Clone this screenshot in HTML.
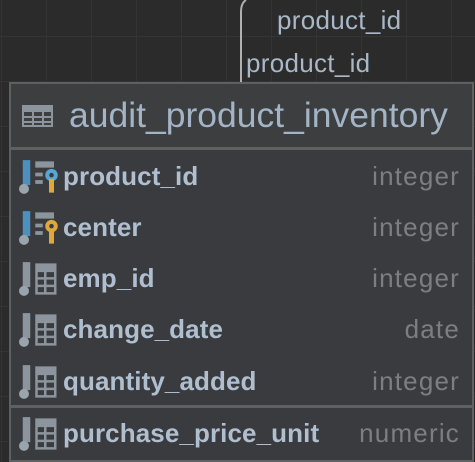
<!DOCTYPE html>
<html><head><style>
body{margin:0;width:475px;height:462px;overflow:hidden;background:#2b2b2b;
background-image:linear-gradient(#343434 1px,transparent 1px),linear-gradient(90deg,#343434 1px,transparent 1px);
background-size:45px 45px;background-position:0 36px,1px 0;font-family:"Liberation Sans",sans-serif;position:relative}
.t{position:absolute;color:#a9b7c6;font-size:26px;letter-spacing:0.3px}
.box{position:absolute;left:9px;top:82px;width:461px;height:376px;border:2px solid #5e6062;background:#393b3e}
.hdr{height:63px;background:#3c3e40;border-bottom:3px solid #5e6062;position:relative}
.hdr span{position:absolute;left:58px;top:11px;font-size:35.5px;color:#a3b4c6}
.row{position:absolute;left:0;width:461px;height:50px}
.row .n{position:absolute;left:52px;top:9px;font-size:26px;font-weight:bold;color:#b0bfd0;letter-spacing:0.1px}
.row .ty{position:absolute;right:12px;top:9px;font-size:26px;color:#7c7f82;letter-spacing:1.2px}
.row svg{position:absolute;left:8px;top:8px}
</style></head><body>
<svg style="position:absolute;left:0;top:0" width="475" height="90"><path d="M241 82 V12 Q241 3 246 0" stroke="#b0b0b0" stroke-width="2" fill="none"/></svg>
<div class="t" style="left:277px;top:5px">product_id</div>
<div class="t" style="left:246px;top:48px">product_id</div>
<div class="box">
<div class="hdr">
<svg style="position:absolute;left:11px;top:21px" width="32" height="22"><rect x="0" y="0" width="31" height="22" fill="#8c959e"/><g fill="#3c3e40"><rect x="2" y="7" width="8" height="4"/><rect x="12" y="7" width="8" height="4"/><rect x="22" y="7" width="7" height="4"/><rect x="2" y="13" width="8" height="3"/><rect x="12" y="13" width="8" height="3"/><rect x="22" y="13" width="7" height="3"/><rect x="2" y="18" width="8" height="2"/><rect x="12" y="18" width="8" height="2"/><rect x="22" y="18" width="7" height="2"/></g></svg>
<span>audit_product_inventory</span></div>

<div class="row" style="top:68px"><svg width="40" height="34" viewBox="0 0 32 27"><rect x="3" y="0" width="6" height="20" fill="#4f8fbd"/><circle cx="4" cy="23" r="4" fill="#9aa4ad"/><rect x="13" y="1" width="15" height="5" fill="#8c959e"/><rect x="13" y="10" width="6" height="3" fill="#8c959e"/><rect x="13" y="16" width="6" height="3" fill="#8c959e"/><circle cx="26" cy="12" r="5" fill="#56a6d6"/><circle cx="26" cy="12" r="1.8" fill="#393b3e"/><rect x="24" y="15" width="4" height="11" fill="#e0a838"/></svg><span class="n">product_id</span><span class="ty">integer</span></div>
<div class="row" style="top:119px"><svg width="40" height="34" viewBox="0 0 32 27"><rect x="3" y="0" width="6" height="20" fill="#4f8fbd"/><circle cx="4" cy="23" r="4" fill="#9aa4ad"/><rect x="13" y="1" width="15" height="5" fill="#8c959e"/><rect x="13" y="10" width="6" height="3" fill="#8c959e"/><rect x="13" y="16" width="6" height="3" fill="#8c959e"/><circle cx="26" cy="12" r="5" fill="#e0a838"/><circle cx="26" cy="12" r="1.8" fill="#393b3e"/><rect x="24" y="15" width="4" height="11" fill="#e0a838"/></svg><span class="n">center</span><span class="ty">integer</span></div>
<div class="row" style="top:170px"><svg width="40" height="34" viewBox="0 0 32 27"><rect x="3" y="0" width="6" height="20" fill="#8c959e"/><circle cx="4" cy="23" r="4" fill="#9aa4ad"/><rect x="13" y="1" width="17" height="25" fill="#8c959e"/><g fill="#393b3e"><rect x="15" y="8" width="5" height="4"/><rect x="22" y="8" width="6" height="4"/><rect x="15" y="14" width="5" height="4"/><rect x="22" y="14" width="6" height="4"/><rect x="15" y="20" width="5" height="4"/><rect x="22" y="20" width="6" height="4"/></g></svg><span class="n">emp_id</span><span class="ty">integer</span></div>
<div class="row" style="top:221px"><svg width="40" height="34" viewBox="0 0 32 27"><rect x="3" y="0" width="6" height="20" fill="#8c959e"/><circle cx="4" cy="23" r="4" fill="#9aa4ad"/><rect x="13" y="1" width="17" height="25" fill="#8c959e"/><g fill="#393b3e"><rect x="15" y="8" width="5" height="4"/><rect x="22" y="8" width="6" height="4"/><rect x="15" y="14" width="5" height="4"/><rect x="22" y="14" width="6" height="4"/><rect x="15" y="20" width="5" height="4"/><rect x="22" y="20" width="6" height="4"/></g></svg><span class="n">change_date</span><span class="ty">date</span></div>
<div class="row" style="top:273px"><svg width="40" height="34" viewBox="0 0 32 27"><rect x="3" y="0" width="6" height="20" fill="#8c959e"/><circle cx="4" cy="23" r="4" fill="#9aa4ad"/><rect x="13" y="1" width="17" height="25" fill="#8c959e"/><g fill="#393b3e"><rect x="15" y="8" width="5" height="4"/><rect x="22" y="8" width="6" height="4"/><rect x="15" y="14" width="5" height="4"/><rect x="22" y="14" width="6" height="4"/><rect x="15" y="20" width="5" height="4"/><rect x="22" y="20" width="6" height="4"/></g></svg><span class="n">quantity_added</span><span class="ty">integer</span></div>
<div style="position:absolute;left:0;top:321px;width:461px;height:3px;background:#5e6062"></div>
<div class="row" style="top:325px"><svg width="40" height="34" viewBox="0 0 32 27"><rect x="3" y="0" width="6" height="20" fill="#8c959e"/><circle cx="4" cy="23" r="4" fill="#9aa4ad"/><rect x="13" y="1" width="17" height="25" fill="#8c959e"/><g fill="#393b3e"><rect x="15" y="8" width="5" height="4"/><rect x="22" y="8" width="6" height="4"/><rect x="15" y="14" width="5" height="4"/><rect x="22" y="14" width="6" height="4"/><rect x="15" y="20" width="5" height="4"/><rect x="22" y="20" width="6" height="4"/></g></svg><span class="n">purchase_price_unit</span><span class="ty">numeric</span></div>
</div>
</body></html>
